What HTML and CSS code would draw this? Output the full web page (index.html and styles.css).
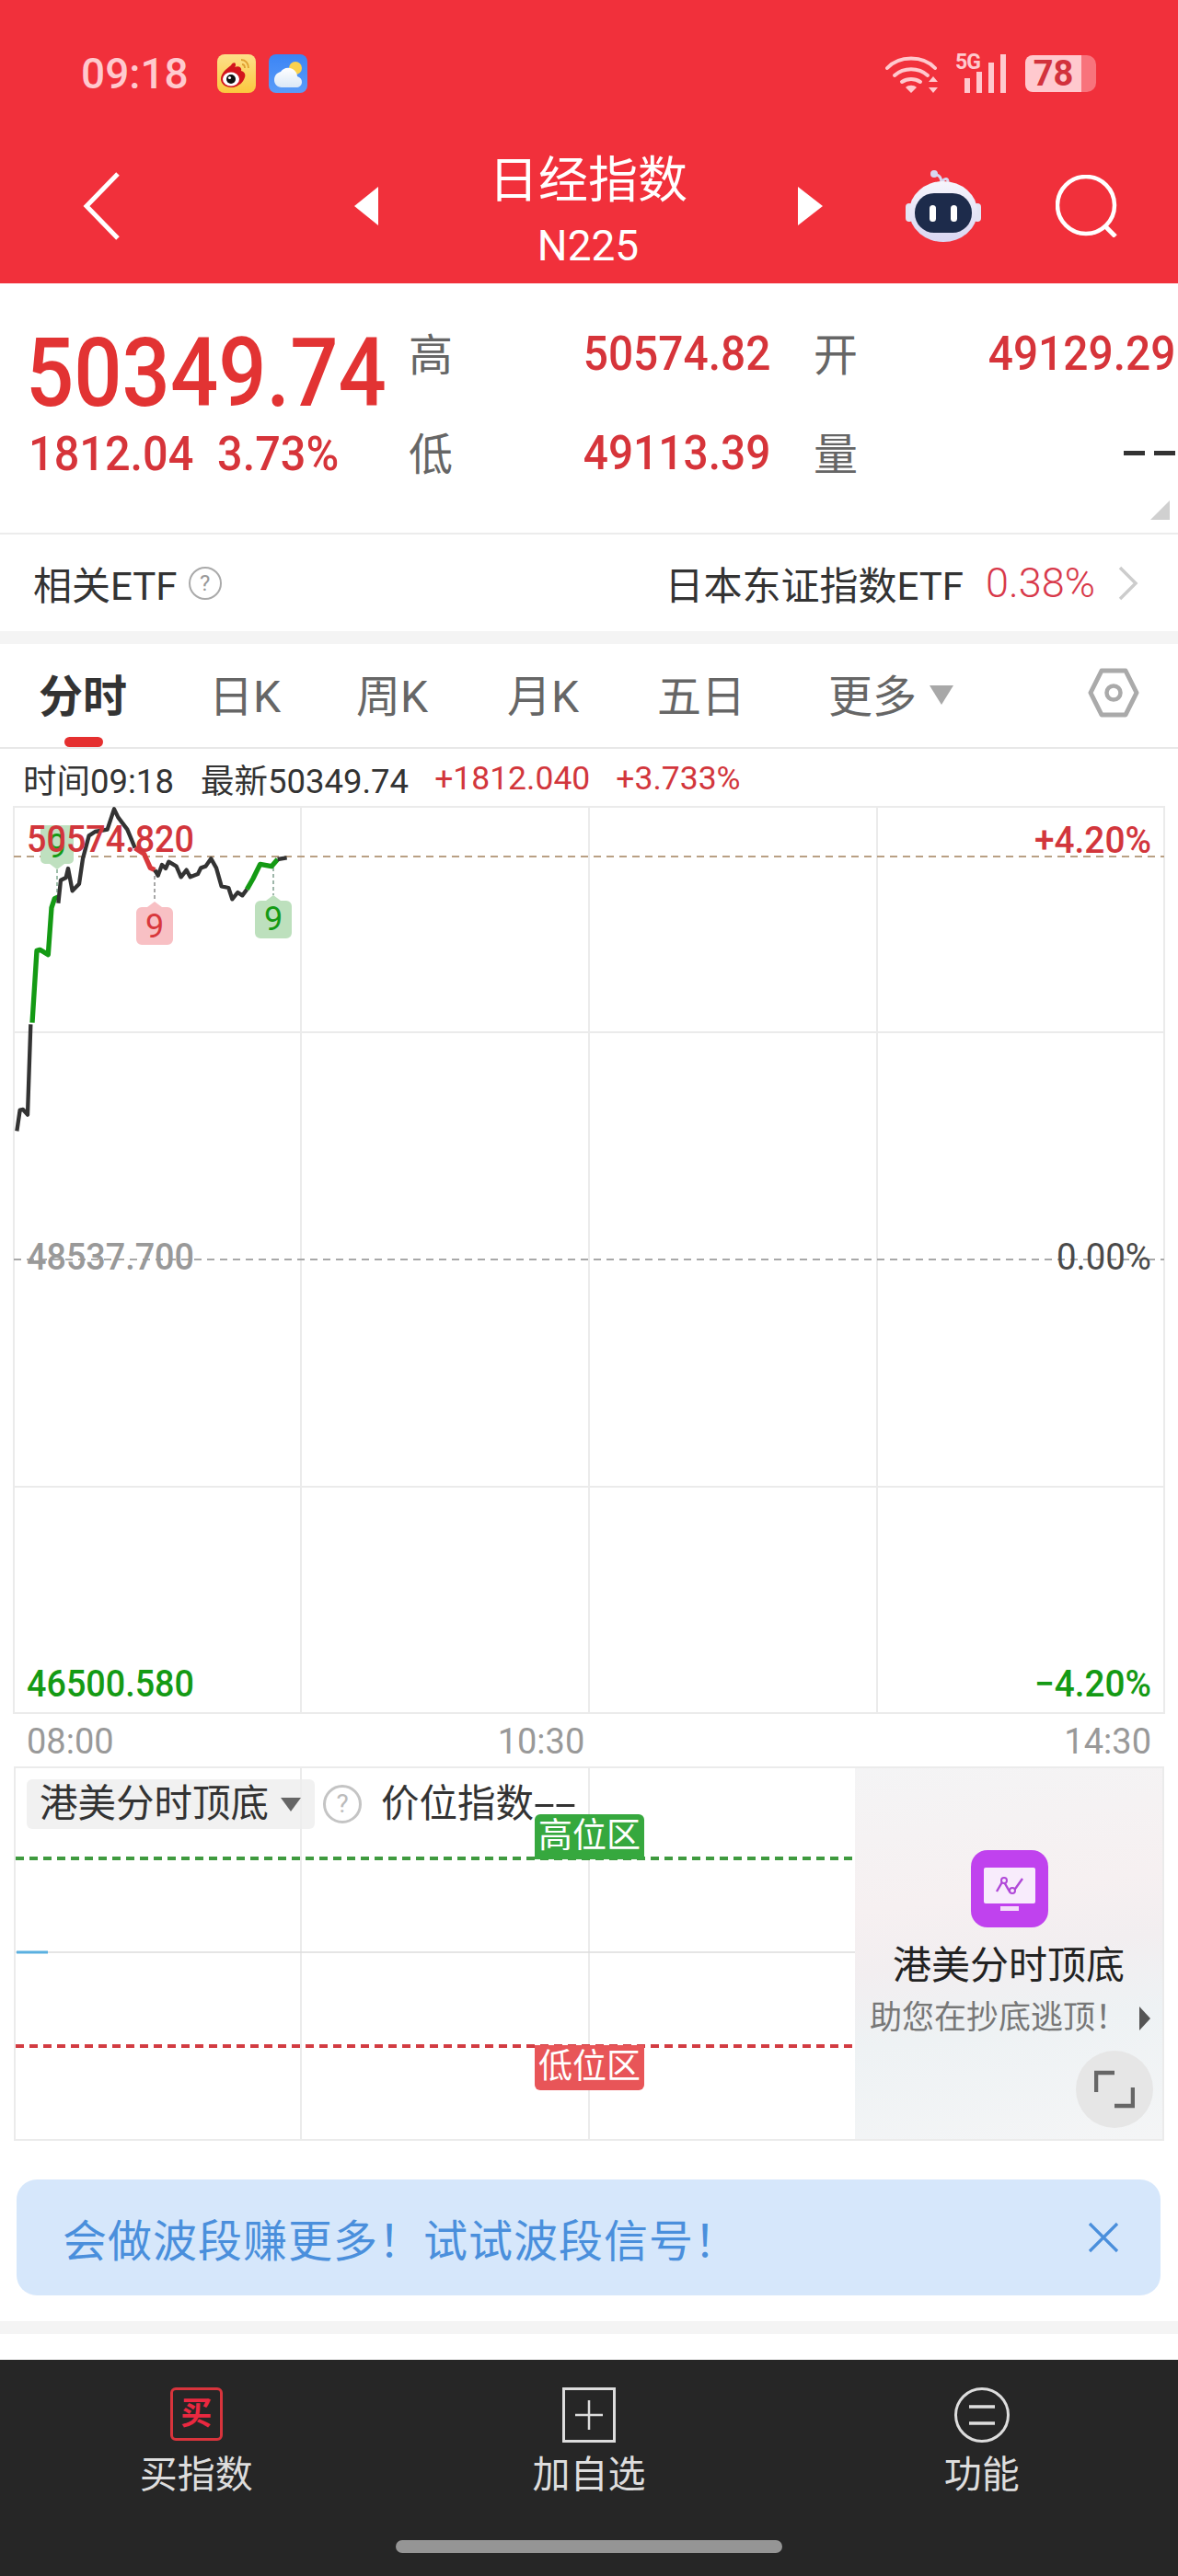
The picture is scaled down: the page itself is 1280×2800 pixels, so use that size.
FILE: index.html
```html
<!DOCTYPE html>
<html lang="zh-CN">
<head>
    <meta charset="UTF-8">
    <title>日经指数 N225</title>
    <meta name="viewport" content="width=device-width, initial-scale=1">
    <link rel="stylesheet" href="styles.css">
</head>
<body>
    <header class="topbar">
        <div class="status">
            <span class="clock">09:18</span>
            <svg class="app-icon first" viewBox="0 0 42 42">
                <defs><linearGradient id="sun" x1="0" y1="0" x2="0" y2="1"><stop offset="0" stop-color="#fde08a"/><stop offset="1" stop-color="#fbc83e"/></linearGradient></defs>
                <rect width="42" height="42" rx="8" fill="url(#sun)"/>
                <path d="M4 27c0-7 7-12 11-15 1-3 5-4 5-1 0 1 0 2-1 3 5-2 8 1 7 4 4 1 5 4 4 7-2 7-9 11-15 11-6 0-11-4-11-9z" fill="#d3151c"/>
                <ellipse cx="15" cy="27" rx="9" ry="7.5" fill="#fff"/>
                <circle cx="15" cy="27" r="5" fill="#111"/>
                <circle cx="13.5" cy="25.5" r="1.6" fill="#fff"/>
                <path d="M26 6c5 0 8 4 8 9M27 11c2 0 3 2 3 4" fill="none" stroke="#e0a030" stroke-width="1.8"/>
            </svg>
            <svg class="app-icon" viewBox="0 0 42 42">
                <defs>
                    <linearGradient id="sky" x1="0" y1="0" x2="0" y2="1"><stop offset="0" stop-color="#3b84f5"/><stop offset="1" stop-color="#5a9cf8"/></linearGradient>
                    <linearGradient id="cloud" x1="0" y1="0" x2="0" y2="1"><stop offset="0" stop-color="#fff"/><stop offset="1" stop-color="#dbe8f7"/></linearGradient>
                </defs>
                <rect width="42" height="42" rx="8" fill="url(#sky)"/>
                <circle cx="29" cy="15" r="7" fill="#fbd24e"/>
                <path d="M14 36C9 36 6 32 6 28c0-5 3-8 7-9 2-3 6-5 10-4 5 1 8 5 8 9 3 1 5 3 5 6 0 4-3 6-6 6z" fill="url(#cloud)"/>
            </svg>
            <svg class="wifi" viewBox="0 0 60 42">
                <g fill="none" stroke="#ffc9ce" stroke-width="4" stroke-linecap="round">
                    <path d="M2 15C15 1 41 1 54 15"/>
                    <path d="M10 23c10-9 26-9 36 0"/>
                    <path d="M18 30c6-4 14-4 20 0"/>
                </g>
                <path d="M28 42l-6-6c3-3 9-3 12 0zM52 24l5 6H47zM52 42l-5-6h10z" fill="#ffc9ce"/>
            </svg>
            <div class="signal">
                <span class="net">5G</span>
                <svg viewBox="0 0 45 42"><g fill="#ffc9ce"><rect y="26" width="6" height="16"/><rect x="13" y="19" width="6" height="23"/><rect x="26" y="9" width="6" height="33"/><rect x="39" width="6" height="42"/></g></svg>
            </div>
            <div class="battery"><span class="level">78</span><span class="rest"></span></div>
        </div>
        <div class="nav">
            <svg class="back" viewBox="0 0 41 74"><path d="M38 2L4 37l34 35" fill="none" stroke="#fff" stroke-width="5"/></svg>
            <span class="tri tri-left"></span>
            <div class="title">
                <h1>日经指数</h1>
                <small>N225</small>
            </div>
            <span class="tri tri-right"></span>
            <svg class="robot" viewBox="0 0 84 78">
                <defs><linearGradient id="shell" x1="0" y1="0" x2="0" y2="1"><stop offset="0" stop-color="#f6f5fc"/><stop offset="1" stop-color="#d9d6f2"/></linearGradient></defs>
                <path d="M40 14c0-5-2-8-5-9M41 12c3-4 6-3 6 1" fill="none" stroke="#d8d8f0" stroke-width="3"/>
                <circle cx="32" cy="4" r="4" fill="#d8d8f0"/>
                <rect x="1" y="36" width="8" height="20" rx="4" fill="#e4e4f4"/>
                <rect x="75" y="36" width="8" height="20" rx="4" fill="#e4e4f4"/>
                <ellipse cx="42" cy="45" rx="37" ry="33" fill="url(#shell)"/>
                <rect x="11" y="25" width="62" height="43" rx="21" fill="#1d2b4b"/>
                <rect x="27" y="38" width="7" height="18" rx="3.5" fill="#fff"/>
                <rect x="50" y="38" width="7" height="18" rx="3.5" fill="#fff"/>
            </svg>
            <svg class="search" viewBox="0 0 70 68"><circle cx="33" cy="33" r="31" fill="none" stroke="#fff" stroke-width="4.5"/><path d="M54 56l11 11" stroke="#fff" stroke-width="5"/></svg>
        </div>
    </header>

    <section class="quote">
        <div class="quote-main">
            <div class="price din">50349.74</div>
            <div class="change">
                <span class="din">1812.04</span>
                <span class="din">3.73%</span>
            </div>
        </div>
        <div class="stats">
            <div class="stat"><label>高</label><b class="din">50574.82</b></div>
            <div class="stat"><label>开</label><b class="din">49129.29</b></div>
            <div class="stat"><label>低</label><b class="din">49113.39</b></div>
            <div class="stat"><label>量</label><i class="dash"></i></div>
        </div>
        <span class="corner"></span>
    </section>

    <section class="etf">
        <div class="etf-left">相关ETF<span class="help">?</span></div>
        <div class="etf-right">
            日本东证指数ETF<span class="etf-pct">0.38%</span>
            <svg viewBox="0 0 22 38"><path d="M2 2l17 17L2 36" fill="none" stroke="#ccc" stroke-width="3.5"/></svg>
        </div>
    </section>
    <div class="band"></div>

    <nav class="tabs">
        <a class="tab on">分时</a>
        <a class="tab">日K</a>
        <a class="tab">周K</a>
        <a class="tab">月K</a>
        <a class="tab">五日</a>
        <a class="tab">更多<span class="caret"></span></a>
        <svg class="hex" viewBox="0 0 56 54"><path d="M15 3h26l12 24-12 24H15L3 27z" fill="none" stroke="#aaa" stroke-width="5" stroke-linejoin="round"/><circle cx="28" cy="27" r="7.5" fill="none" stroke="#aaa" stroke-width="4.5"/></svg>
    </nav>

    <div class="readout">
        <span class="r-time">时间09:18</span>
        <span class="r-last">最新50349.74</span>
        <span class="r-chg">+1812.040</span>
        <span class="r-pct">+3.733%</span>
    </div>

    <svg class="chart" viewBox="0 870 1280 995" width="1280" height="995">
        <g stroke="#ebebeb" stroke-width="2" fill="none">
            <rect x="15" y="877" width="1250" height="985"/>
            <path d="M327 877V1862M640 877V1862M953 877V1862M15 1122H1265M15 1616H1265"/>
        </g>
        <path d="M15 931H1265" stroke="#b9a084" stroke-width="2" stroke-dasharray="8 6"/>
        <path d="M15 1369H1265" stroke="#a8a8a8" stroke-width="2" stroke-dasharray="8 6"/>

        <g class="sign">
            <path d="M62 945l-8-6h-5a5 5 0 0 1-5-5V902a5 5 0 0 1 5-5h26a5 5 0 0 1 5 5v32a5 5 0 0 1-5 5h-5z" fill="#bfe0bf"/>
            <path d="M62 945V975" stroke="#7fa98f" stroke-width="1.5" stroke-dasharray="4 3"/>
            <text x="62" y="932" fill="#149a14">9</text>
            <path d="M168 945V980" stroke="#8a8a8a" stroke-width="1.5" stroke-dasharray="4 3"/>
            <path d="M168 980l8 6h6a6 6 0 0 1 6 6v29a6 6 0 0 1-6 6h-28a6 6 0 0 1-6-6v-29a6 6 0 0 1 6-6h6z" fill="#f8c0c4"/>
            <text x="168" y="1019" fill="#d8383c">9</text>
            <path d="M297 943V973" stroke="#7f9f8f" stroke-width="1.5" stroke-dasharray="4 3"/>
            <path d="M297 973l8 6h6a6 6 0 0 1 6 6v29a6 6 0 0 1-6 6h-28a6 6 0 0 1-6-6v-29a6 6 0 0 1 6-6h6z" fill="#bde0bd"/>
            <text x="297" y="1011" fill="#149a14">9</text>
        </g>

        <g transform="translate(0 780) scale(.33333)" fill="none" stroke-width="13" stroke-linejoin="round">
            <polyline stroke="#333" points="55,1348 65,1280 75,1278 90,1295 100,1000"/>
            <polyline stroke="#149a14" stroke-width="16" points="105,995 120,760 130,757 157,773 168,620 178,590 190,585"/>
            <polyline stroke="#333" points="190,605 198,530 215,522 222,492 236,565 258,542 270,460 290,385 310,372 350,365 372,298 385,325 415,365 440,425"/>
            <polyline stroke="#d8383c" stroke-width="16" points="440,425 470,445 490,490 505,497"/>
            <polyline stroke="#333" points="505,497 515,515 528,480 540,492 550,470 575,485 590,520 608,497 620,520 645,510 655,490 670,485 688,460 705,490 722,550 745,555 757,592 775,570 790,580 805,560"/>
            <polyline stroke="#149a14" stroke-width="16" points="805,560 825,525 848,478 885,485 905,462"/>
            <polyline stroke="#333" points="905,462 935,457"/>
        </g>

        <g class="axis">
            <text x="29" y="926" textLength="182" lengthAdjust="spacingAndGlyphs" fill="#d2363c">50574.820</text>
            <text x="1124" y="927" textLength="127" lengthAdjust="spacingAndGlyphs" fill="#d2363c">+4.20%</text>
            <text x="29" y="1380" textLength="182" lengthAdjust="spacingAndGlyphs" fill="#999">48537.700</text>
            <text x="1148" y="1380" textLength="103" lengthAdjust="spacingAndGlyphs" fill="#4a4a4a" class="plain">0.00%</text>
            <text x="29" y="1844" textLength="182" lengthAdjust="spacingAndGlyphs" fill="#149a14">46500.580</text>
            <text x="1124" y="1844" textLength="127" lengthAdjust="spacingAndGlyphs" fill="#149a14">−4.20%</text>
        </g>
    </svg>

    <div class="times">
        <span>08:00</span>
        <span class="t-mid">10:30</span>
        <span class="t-end">14:30</span>
    </div>

    <section class="sub">
        <div class="sub-plot">
            <svg class="sub-lines" viewBox="0 0 912 403" width="912" height="403">
                <g stroke="#ebebeb" stroke-width="2"><path d="M310 0V403M623 0V403"/></g>
                <path d="M0 200H912" stroke="#dcdcdc" stroke-width="1.5"/>
                <path d="M1 200H35" stroke="#5ab0e0" stroke-width="3"/>
                <path d="M0 98H912" stroke="#3f9a3f" stroke-width="4" stroke-dasharray="9 6"/>
                <path d="M0 302H912" stroke="#d23c42" stroke-width="4" stroke-dasharray="9 6"/>
            </svg>
            <div class="sub-head">
                <div class="chip"><span class="chip-name">港美分时顶底</span><span class="chip-caret"></span></div>
                <span class="help help-big">?</span>
                <span class="sub-value">价位指数<span class="wide-dash">--</span></span>
            </div>
            <span class="zone zone-high">高位区</span>
            <span class="zone zone-low">低位区</span>
        </div>
        <aside class="promo">
            <svg class="promo-icon" viewBox="0 0 84 84">
                <rect width="84" height="84" rx="18" fill="#c042ee"/>
                <rect x="14" y="19" width="56" height="39" rx="2" fill="#f8ecfc"/>
                <rect x="32" y="61" width="20" height="5" fill="#f4dcfa"/>
                <path d="M28 45l7-12 7 12 4 0 10-14" fill="none" stroke="#b048d8" stroke-width="2.4"/>
                <circle cx="36" cy="33" r="3" fill="#f8ecfc" stroke="#b048d8" stroke-width="2"/>
                <circle cx="45" cy="44" r="3" fill="#f8ecfc" stroke="#b048d8" stroke-width="2"/>
            </svg>
            <div class="promo-title">港美分时顶底</div>
            <div class="promo-sub">助您在抄底逃顶！<span class="promo-go"></span></div>
            <button class="expand">
                <svg viewBox="0 0 44 42"><path d="M2 24V3h20M42 19v20H22" fill="none" stroke="#666" stroke-width="4.5"/></svg>
            </button>
        </aside>
    </section>

    <div class="banner">
        <span>会做波段赚更多！试试波段信号！</span>
        <svg viewBox="0 0 34 34"><path d="M2 2l30 30M32 2L2 32" stroke="#4a8fdc" stroke-width="3.2"/></svg>
    </div>
    <div class="band band-low"></div>

    <footer class="dock">
        <div class="dock-items">
            <div class="dock-item">
                <span class="buy-icon">买</span>
                <span>买指数</span>
            </div>
            <div class="dock-item">
                <svg viewBox="0 0 58 60"><rect x="1.5" y="1.5" width="55" height="57" fill="none" stroke="#ddd" stroke-width="3"/><path d="M29 14v32M14 30h30" stroke="#ddd" stroke-width="2.5"/></svg>
                <span>加自选</span>
            </div>
            <div class="dock-item">
                <svg viewBox="0 0 60 60"><circle cx="30" cy="30" r="28.5" fill="none" stroke="#ddd" stroke-width="3"/><path d="M16 21h28M16 39h28" stroke="#ddd" stroke-width="3.5"/></svg>
                <span>功能</span>
            </div>
        </div>
        <div class="home-pill"></div>
    </footer>
</body>
</html>
```

FILE: styles.css
```css
* {
    box-sizing: border-box;
}
body {
    margin: 0;
    width: 1280px;
    background: #fff;
    color: #333;
    font-family: Roboto, "Noto Sans CJK SC", sans-serif;
}

/* red header */
.topbar {
    height: 308px;
    background: #f1303b;
}
.status {
    display: flex;
    align-items: center;
    height: 160px;
    padding-left: 88px;
}
.clock {
    width: 148px;
    font-size: 46px;
    font-weight: 500;
    color: #ffc9ce;
}
.app-icon {
    width: 42px;
    height: 42px;
    margin-left: 14px;
}
.app-icon.first {
    margin-left: 0;
}
.wifi {
    width: 60px;
    height: 42px;
    margin-left: 628px;
}
.signal {
    position: relative;
    width: 55px;
    height: 42px;
    margin-left: 16px;
}
.signal svg {
    position: absolute;
    right: 0;
    top: 0;
    width: 45px;
    height: 42px;
}
.net {
    position: absolute;
    left: 0;
    top: -3px;
    font-size: 23px;
    font-weight: 700;
    line-height: 24px;
    letter-spacing: -1px;
    color: #ffc9ce;
}
.battery {
    display: flex;
    width: 77px;
    height: 40px;
    margin-left: 21px;
}
.level {
    width: 61px;
    border-radius: 8px 0 0 8px;
    background: #ffc9ce;
    color: #d2323c;
    font-size: 38px;
    font-weight: 700;
    line-height: 40px;
    text-align: center;
}
.rest {
    flex: 1;
    border-radius: 0 10px 10px 0;
    background: #f8737c;
}
.nav {
    display: flex;
    align-items: center;
    height: 148px;
    padding: 0 0 20px 90px;
}
.back {
    width: 41px;
    height: 74px;
}
.tri {
    width: 0;
    height: 0;
    border-top: 21px solid transparent;
    border-bottom: 21px solid transparent;
}
.tri-left {
    margin-left: 254px;
    border-right: 26px solid #fff;
}
.tri-right {
    border-left: 27px solid #fff;
}
.title {
    width: 456px;
    padding-top: 8px;
    text-align: center;
    color: #fff;
}
.title h1 {
    margin: 0 0 12px;
    font-size: 54px;
    font-weight: 400;
    line-height: 66px;
}
.title small {
    display: block;
    font-size: 46px;
    line-height: 50px;
}
.robot {
    width: 84px;
    height: 78px;
    margin-left: 89px;
}
.search {
    width: 70px;
    height: 68px;
    margin-left: 80px;
}

/* quote block */
.din {
    display: inline-block;
    font-weight: 500;
    transform: scaleX(.92);
    transform-origin: left center;
}
.quote {
    position: relative;
    display: flex;
    height: 273px;
    border-bottom: 2px solid #ececec;
    color: #d6343a;
}
.quote-main {
    width: 444px;
    padding: 42px 0 0 28px;
}
.price {
    display: block;
    font-size: 104px;
    line-height: 112px;
    color: #e23333;
    transform: scaleX(.885);
}
.change {
    display: flex;
    padding-left: 3px;
    font-size: 52px;
    line-height: 64px;
}
.change span {
    width: 205px;
    transform: scaleX(.935);
}
.stats {
    display: grid;
    grid-template-columns: 393px 393px;
    grid-auto-rows: 108px;
    column-gap: 47px;
    padding-top: 22px;
}
.stat {
    display: flex;
    align-items: center;
    justify-content: space-between;
    font-size: 52px;
}
.stat label {
    padding-bottom: 4px;
    font-family: "Noto Sans CJK SC", sans-serif;
    font-size: 48px;
    line-height: 60px;
    color: #666;
}
.stat b {
    transform-origin: right center;
}
.dash {
    width: 56px;
    height: 5px;
    background: repeating-linear-gradient(90deg, #333 0 23px, transparent 23px 33px);
}
.corner {
    position: absolute;
    right: 9px;
    top: 236px;
    width: 0;
    height: 0;
    border-left: 21px solid transparent;
    border-bottom: 21px solid #d0d0d0;
}

/* related etf */
.etf {
    display: flex;
    align-items: center;
    justify-content: space-between;
    height: 105px;
    padding: 0 43px 0 36px;
    font-size: 42px;
}
.etf-left,
.etf-right {
    display: flex;
    align-items: center;
}
.help {
    display: inline-block;
    width: 36px;
    height: 36px;
    margin-left: 12px;
    border: 2px solid #aaa;
    border-radius: 50%;
    color: #999;
    font-size: 24px;
    line-height: 32px;
    text-align: center;
}
.etf-pct {
    margin-left: 24px;
    font-size: 45px;
    font-weight: 300;
    color: #d8394a;
}
.etf-right svg {
    width: 22px;
    height: 38px;
    margin-left: 25px;
}
.band {
    height: 14px;
    background: #f4f4f4;
}

/* period tabs */
.tabs {
    position: relative;
    display: grid;
    grid-template-columns: 185px 160px 164px 163px 186px 1fr 98px;
    align-items: center;
    height: 114px;
    padding: 0 0 6px 42px;
    border-bottom: 2px solid #e8e8e8;
}
.tab {
    font-size: 48px;
    color: #666;
}
.tab.on {
    font-weight: 700;
    color: #333;
}
.tab.on::after {
    content: "";
    position: absolute;
    left: 70px;
    bottom: 0;
    width: 42px;
    height: 11px;
    border-radius: 6px;
    background: #e53030;
}
.caret {
    display: inline-block;
    margin-left: 14px;
    vertical-align: 8px;
    border-left: 13px solid transparent;
    border-right: 13px solid transparent;
    border-top: 21px solid #a8a8a8;
}
.hex {
    width: 56px;
    height: 54px;
}

/* readout over chart */
.readout {
    display: flex;
    align-items: center;
    height: 56px;
    padding: 8px 0 0 25px;
    font-size: 36.5px;
}
.r-last {
    margin-left: 29px;
}
.r-chg {
    margin-left: 28px;
    font-size: 35.5px;
    color: #d2363c;
}
.r-pct {
    margin-left: 28px;
    font-size: 35.5px;
    color: #d2363c;
}
.chart {
    display: block;
}
.axis text {
    font-family: Roboto, sans-serif;
    font-size: 40px;
    font-weight: 500;
}
.axis .plain {
    font-weight: 400;
}
.sign text {
    font-family: Roboto, sans-serif;
    font-size: 36px;
    text-anchor: middle;
}
.times {
    display: flex;
    align-items: center;
    height: 55px;
    padding: 0 29px;
    font-size: 38px;
    color: #999;
}
.t-mid {
    margin-left: 417px;
}
.t-end {
    margin-left: auto;
}

/* sub chart */
.sub {
    display: flex;
    width: 1250px;
    height: 407px;
    margin-left: 15px;
    border: 2px solid #ebebeb;
}
.sub-plot {
    position: relative;
    width: 912px;
}
.sub-lines {
    position: absolute;
    left: 0;
    top: 0;
}
.sub-head {
    position: relative;
    display: flex;
    align-items: center;
    padding: 12px 0 0 12px;
}
.chip {
    display: flex;
    align-items: center;
    width: 313px;
    height: 54px;
    padding-left: 14px;
    border-radius: 6px;
    background: rgba(238, 238, 238, .8);
    font-size: 41.5px;
}
.chip-name {
    line-height: 40px;
}
.chip-caret {
    margin-left: 13px;
    border-left: 11px solid transparent;
    border-right: 11px solid transparent;
    border-top: 15px solid #666;
}
.help-big {
    width: 42px;
    height: 42px;
    margin-left: 9px;
    border-width: 3px;
    border-color: #c4c4c4;
    color: #bbb;
    font-size: 28px;
    line-height: 36px;
}
.sub-value {
    margin-left: 21px;
    font-size: 41.5px;
    line-height: 18px;
}
.wide-dash {
    display: inline-block;
    transform: scaleX(2);
    transform-origin: left center;
}
.zone {
    position: absolute;
    left: 564px;
    width: 119px;
    height: 49px;
    color: #fff;
    font-size: 37px;
    line-height: 47px;
    text-align: center;
}
.zone-high {
    top: 50px;
    border-radius: 6px 6px 0 0;
    background: #36a83e;
}
.zone-low {
    top: 301px;
    border-radius: 0 0 6px 6px;
    background: #e85558;
}
.promo {
    position: relative;
    display: flex;
    flex-direction: column;
    align-items: center;
    width: 334px;
    padding-top: 89px;
    background: linear-gradient(172deg, #f4f4f5 0%, #f6f0f1 35%, #f2eef0 50%, #eef2f4 68%, #f4f5f6 100%);
}
.promo-icon {
    width: 84px;
    height: 84px;
    margin-left: 2px;
}
.promo-title {
    margin-top: 14px;
    font-size: 42px;
    line-height: 56px;
    color: #222;
}
.promo-sub {
    display: flex;
    align-items: center;
    width: 100%;
    margin-top: 6px;
    padding: 0 13px 0 16px;
    font-size: 35px;
    line-height: 46px;
    color: #777;
}
.promo-go {
    margin-left: auto;
    border-top: 13px solid transparent;
    border-bottom: 13px solid transparent;
    border-left: 12px solid #555;
}
.expand {
    position: absolute;
    right: 10px;
    bottom: 12px;
    display: flex;
    align-items: center;
    justify-content: center;
    width: 84px;
    height: 84px;
    padding: 0;
    border: 0;
    border-radius: 50%;
    background: #e6e6e6;
}
.expand svg {
    width: 44px;
    height: 42px;
}

/* banner */
.banner {
    display: flex;
    align-items: center;
    justify-content: space-between;
    width: 1243px;
    height: 126px;
    margin: 42px 0 28px 18px;
    padding: 0 45px 0 50px;
    border-radius: 22px;
    background: #d6e7fb;
    color: #4a8fdc;
    font-size: 48px;
    letter-spacing: 1px;
}
.banner svg {
    width: 34px;
    height: 34px;
}
.band-low {
    margin-bottom: 28px;
}

/* bottom dock */
.dock {
    display: flex;
    flex-direction: column;
    height: 235px;
    background: #262626;
    color: #ddd;
}
.dock-items {
    display: grid;
    grid-template-columns: repeat(3, 1fr);
    padding-top: 30px;
}
.dock-item {
    display: flex;
    flex-direction: column;
    align-items: center;
    font-size: 41px;
    line-height: 60px;
}
.dock-item svg {
    width: 60px;
    height: 60px;
    margin-bottom: 5px;
}
.buy-icon {
    width: 57px;
    height: 58px;
    margin-bottom: 7px;
    border: 3px solid #d8343c;
    border-radius: 6px;
    color: #ea2840;
    font-size: 34px;
    font-weight: 700;
    line-height: 50px;
    text-align: center;
}
.home-pill {
    width: 420px;
    height: 14px;
    margin: auto auto 25px;
    border-radius: 7px;
    background: #959595;
}
```
